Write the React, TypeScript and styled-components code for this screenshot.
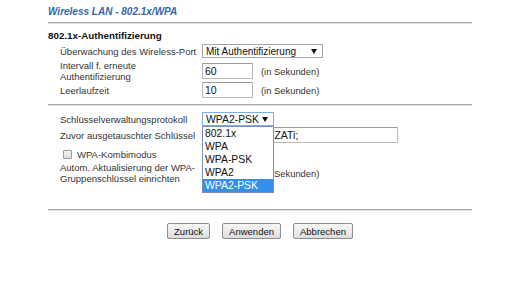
import React from 'react';
import styled, { createGlobalStyle } from 'styled-components';

const GlobalStyle = createGlobalStyle`
  html, body {
    margin: 0;
    padding: 0;
    background: #ffffff;
  }
  body {
    font-family: 'Liberation Sans', Arial, sans-serif;
    color: #333;
  }
`;

const Page = styled.div`
  width: 424px;
  padding: 6px 0 0 48px;
`;

const Title = styled.h1`
  margin: 0;
  font-size: 10px;
  line-height: 12px;
  font-weight: 700;
  font-style: italic;
  color: #3566a8;
`;

const Rule = styled.div<{ $top: number }>`
  margin-top: ${(p) => p.$top}px;
  height: 0;
  border-top: 1px solid #a8a8a8;
  border-bottom: 1px solid #e2e2e2;
`;

const SectionHead = styled.h2`
  margin: 6px 0 0 0;
  font-size: 9.8px;
  line-height: 12px;
  font-weight: 700;
  color: #111;
`;

const Row = styled.div<{ $top: number; $h?: number }>`
  display: grid;
  grid-template-columns: 142px auto 1fr;
  align-items: center;
  margin-top: ${(p) => p.$top}px;
  height: ${(p) => (p.$h ? `${p.$h}px` : 'auto')};
  padding-left: 12px;
`;

const Label = styled.div`
  font-size: 9.5px;
  line-height: 11px;
  color: #333;
`;

const Unit = styled.span`
  font-size: 9.4px;
  color: #333;
  padding-left: 8px;
`;

const SelectWrap = styled.div`
  position: relative;
`;

const SelectBox = styled.div<{ $w: number; $focus?: boolean }>`
  display: flex;
  align-items: center;
  justify-content: space-between;
  box-sizing: border-box;
  width: ${(p) => p.$w}px;
  height: 14px;
  padding: 0 5px 0 3px;
  border: 1px solid ${(p) => (p.$focus ? '#7eaee6' : '#a6a6a6')};
  background: #fff;
  font-size: ${(p) => (p.$focus ? '10.4px' : '10px')};
  color: #111;
`;

const Arrow = styled.span`
  width: 0;
  height: 0;
  border-left: 3px solid transparent;
  border-right: 3px solid transparent;
  border-top: 5px solid #111;
`;

const DropList = styled.ul`
  position: absolute;
  top: 100%;
  left: 0;
  z-index: 5;
  box-sizing: border-box;
  width: 72px;
  margin: 0;
  padding: 0;
  list-style: none;
  background: #fff;
  border: 1px solid #7d8fb5;
`;

const DropItem = styled.li<{ $active?: boolean }>`
  height: 13px;
  line-height: 13px;
  padding-left: 2px;
  font-size: 10.4px;
  color: ${(p) => (p.$active ? '#fff' : '#111')};
  background: ${(p) => (p.$active ? '#3390f0' : 'transparent')};
`;

const TextInput = styled.div<{ $w: number }>`
  box-sizing: border-box;
  width: ${(p) => p.$w}px;
  height: 16px;
  padding: 0 2px;
  border: 1px solid #b9b9b9;
  border-top-color: #9c9c9c;
  background: #fff;
  font-size: 10.5px;
  line-height: 14px;
  color: #111;
  white-space: nowrap;
  overflow: hidden;
`;

const CheckRow = styled.label`
  display: flex;
  align-items: center;
  gap: 5px;
  margin-top: 5px;
  height: 12px;
  padding-left: 15px;
  font-size: 9.5px;
  color: #333;
`;

const CheckBox = styled.span`
  box-sizing: border-box;
  width: 9px;
  height: 9px;
  border: 1px solid #9a9a9a;
  border-radius: 1px;
  background: linear-gradient(#f4f4f4, #dcdcdc);
`;

const ButtonBar = styled.div`
  display: flex;
  justify-content: center;
  gap: 12px;
  margin-top: 12px;
`;

const Button = styled.button`
  height: 16px;
  padding: 0 6px;
  border: 1px solid #8e8e8e;
  border-radius: 2px;
  background: linear-gradient(#f7f7f7, #dddddd);
  font-family: 'Liberation Sans', Arial, sans-serif;
  font-size: 9.5px;
  line-height: 13px;
  color: #111;
`;

const protocols = ['802.1x', 'WPA', 'WPA-PSK', 'WPA2', 'WPA2-PSK'];

export default function App() {
  return (
    <>
      <GlobalStyle />
      <Page>
        <Title>Wireless LAN - 802.1x/WPA</Title>
        <Rule $top={4} />
        <SectionHead>802.1x-Authentifizierung</SectionHead>

        <Row $top={2}>
          <Label>Überwachung des Wireless-Port</Label>
          <SelectBox $w={121}>
            <span>Mit Authentifizierung</span>
            <Arrow />
          </SelectBox>
        </Row>
        <Row $top={2} $h={22}>
          <Label>
            Intervall f. erneute
            <br />
            Authentifizierung
          </Label>
          <TextInput $w={51}>60</TextInput>
          <Unit>(in Sekunden)</Unit>
        </Row>
        <Row $top={0} $h={16}>
          <Label>Leerlaufzeit</Label>
          <TextInput $w={51}>10</TextInput>
          <Unit>(in Sekunden)</Unit>
        </Row>

        <Rule $top={6} />

        <Row $top={6} $h={14}>
          <Label>Schlüsselverwaltungsprotokoll</Label>
          <SelectWrap>
            <SelectBox $w={72} $focus>
              <span>WPA2-PSK</span>
              <Arrow />
            </SelectBox>
            <DropList>
              {protocols.map((p) => (
                <DropItem key={p} $active={p === 'WPA2-PSK'}>
                  {p}
                </DropItem>
              ))}
            </DropList>
          </SelectWrap>
        </Row>
        <Row $top={1} $h={16}>
          <Label>Zuvor ausgetauschter Schlüssel</Label>
          <TextInput $w={196}>Ab3xK9mQr7TZATi;</TextInput>
        </Row>
        <CheckRow>
          <CheckBox />
          WPA-Kombimodus
        </CheckRow>
        <Row $top={2} $h={22}>
          <Label>
            Autom. Aktualisierung der WPA-
            <br />
            Gruppenschlüssel einrichten
          </Label>
          <TextInput $w={51}>3600</TextInput>
          <Unit>(in Sekunden)</Unit>
        </Row>

        <Rule $top={25} />

        <ButtonBar>
          <Button>Zurück</Button>
          <Button>Anwenden</Button>
          <Button>Abbrechen</Button>
        </ButtonBar>
      </Page>
    </>
  );
}
